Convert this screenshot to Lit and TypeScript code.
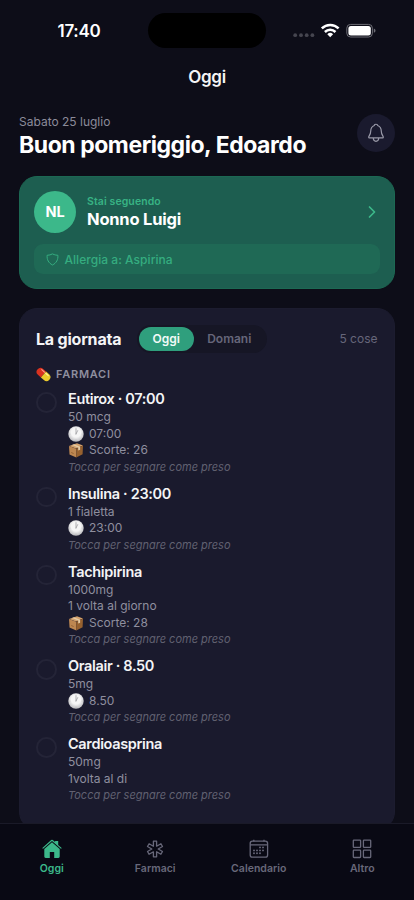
import { LitElement, html, css, svg, nothing } from "lit";
import { customElement, property } from "lit/decorators.js";

type Detail = { icon?: "clock" | "box"; text: string };
type Medicine = { name: string; details: Detail[] };

const medicines: Medicine[] = [
  { name: "Eutirox · 07:00", details: [{ text: "50 mcg" }, { icon: "clock", text: "07:00" }, { icon: "box", text: "Scorte: 26" }] },
  { name: "Insulina · 23:00", details: [{ text: "1 fialetta" }, { icon: "clock", text: "23:00" }] },
  { name: "Tachipirina", details: [{ text: "1000mg" }, { text: "1 volta al giorno" }, { icon: "box", text: "Scorte: 28" }] },
  { name: "Oralair · 8.50", details: [{ text: "5mg" }, { icon: "clock", text: "8.50" }] },
  { name: "Cardioasprina", details: [{ text: "50mg" }, { text: "1volta al di" }] },
];

const clock = html`<svg width="16" height="16" viewBox="0 0 16 16">
  <defs><radialGradient id="face" cx=".5" cy=".4" r=".6"><stop offset=".5" stop-color="#f6f6f6" /><stop offset="1" stop-color="#b9b9bd" /></radialGradient></defs>
  <circle cx="8" cy="8" r="7.7" fill="url(#face)" />
  <g fill="#a5a5a9"><circle cx="8" cy="2" r=".4" /><circle cx="14" cy="8" r=".4" /><circle cx="8" cy="14" r=".4" /><circle cx="2" cy="8" r=".4" /></g>
  <path d="M8 8V2.8M8 8l1.7-3.4" stroke="#929297" stroke-width=".7" fill="none" stroke-linecap="round" />
</svg>`;

const box = html`<svg width="16" height="16" viewBox="0 0 16 16">
  <path d="M1 4.1 9 1.2 15 3.4 8 6.6Z" fill="#d3a16c" />
  <path d="M1 4.1 8.3 6.7V15.4L1.5 12.5Z" fill="#bd8751" />
  <path d="M8.3 6.7 15 3.4 14.6 12.2 8.3 15.4Z" fill="#96612f" />
  <path d="m4 3 2-.7 6.1 2.4v3l-1.9.9v-3Z" fill="#e4cba6" />
  <path d="m3.2 10.5 2.4 1" stroke="#8c5a2d" stroke-width=".8" />
</svg>`;

const pill = html`<svg width="15" height="15" viewBox="0 0 15 15">
  <g transform="rotate(42 7.5 7.5)">
    <path d="M7.5 3.6H3.5a3.9 3.9 0 0 0 0 7.8h4Z" fill="#d9321f" />
    <path d="M7.5 3.6h4a3.9 3.9 0 0 1 0 7.8h-4Z" fill="#eccb2c" />
    <path d="M3 5.1h3.8" stroke="#ff9a86" stroke-width="1.1" stroke-linecap="round" />
    <path d="M8.3 5.1h3.5" stroke="#fff3a0" stroke-width="1.1" stroke-linecap="round" />
  </g>
</svg>`;

@customElement("medicine-row")
export class MedicineRow extends LitElement {
  @property({ attribute: false }) item!: Medicine;

  static styles = css`
    :host { display: flex; gap: 11.5px; color: #8f8f9f; }
    .check { box-sizing: border-box; width: 20.5px; height: 20.5px; margin-top: 3px; border: 2px solid #242437; border-radius: 50%; flex: none; }
    .name { color: #f4f4f6; font-size: 14.5px; font-weight: 600; line-height: 20px; letter-spacing: -0.34px; white-space: nowrap; }
    .detail { display: flex; align-items: center; gap: 5px; height: 16.5px; line-height: 16.5px; font-size: 12px; }
    .note { font-style: italic; font-size: 11px; line-height: 17px; color: #616171; white-space: nowrap; }
    svg { display: block; flex: none; }
  `;

  render() {
    return html`
      <div class="check"></div>
      <div>
        <div class="name">${this.item.name}</div>
        ${this.item.details.map(
          (d) => html`<div class="detail">${d.icon === "clock" ? clock : d.icon === "box" ? box : nothing}<span>${d.text}</span></div>`
        )}
        <div class="note">Tocca per segnare come preso</div>
      </div>
    `;
  }
}

const dots = [[10, 8.4], [13, 8.4], [4, 11.4], [7, 11.4], [10, 11.4], [13, 11.4], [4, 14.2], [7, 14.2], [10, 14.2]];

const homeIcon = html`<svg width="20" height="20" viewBox="0 0 20 20" fill="currentColor">
  <path d="M9.2 1.1a1.2 1.2 0 0 1 1.6 0l2.3 2V1.9h3.1v4l3.2 2.9a.55.55 0 0 1-.75.8L10 1.9 1.35 9.6a.55.55 0 0 1-.75-.8Z" />
  <path d="m10 3.2 7.7 6.9v7.5a1.3 1.3 0 0 1-1.3 1.3h-4.2v-6H7.8v6H3.6a1.3 1.3 0 0 1-1.3-1.3v-7.5Z" />
</svg>`;

const medicalIcon = html`<svg width="20" height="20" viewBox="0 0 20 20" fill="none" stroke="currentColor" stroke-width="1.3" stroke-linejoin="round">
  <path d="M8.4 2.2h3.2v5l4.3-2.5 1.6 2.8-4.3 2.5 4.3 2.5-1.6 2.8-4.3-2.5v5H8.4v-5l-4.3 2.5-1.6-2.8L6.8 10 2.5 7.5l1.6-2.8 4.3 2.5Z" />
</svg>`;

const calendarIcon = html`<svg width="20" height="20" viewBox="0 0 20 20" fill="none" stroke="currentColor" stroke-width="1.3">
  <rect x="1.2" y="2.2" width="17.4" height="16" rx="2.2" />
  <path d="M1.2 5.9h17.4M4.8 .8v1.6M15 .8v1.6" />
  <g fill="currentColor" stroke="none">${dots.map(([x, y]) => svg`<circle cx=${x + 1} cy=${y} r=".95" />`)}</g>
</svg>`;

const gridIcon = html`<svg width="20" height="20" viewBox="0 0 20 20" fill="none" stroke="currentColor" stroke-width="1.3">
  <rect x="1.3" y="1.1" width="7.3" height="7.3" rx=".7" /><rect x="11.4" y="1.1" width="7.3" height="7.3" rx=".7" />
  <rect x="1.3" y="11.2" width="7.3" height="7.3" rx=".7" /><rect x="11.4" y="11.2" width="7.3" height="7.3" rx=".7" />
</svg>`;

const tabs = [
  { label: "Oggi", icon: homeIcon, active: true },
  { label: "Farmaci", icon: medicalIcon, active: false },
  { label: "Calendario", icon: calendarIcon, active: false },
  { label: "Altro", icon: gridIcon, active: false },
];

@customElement("app-root")
export class AppRoot extends LitElement {
  static styles = css`
    :host { display: flex; flex-direction: column; width: 414px; height: 900px; overflow: hidden; background: #0d0d18; color: #fff; font-family: Inter, "Liberation Sans", sans-serif; white-space: nowrap; -webkit-font-smoothing: antialiased; }
    svg { display: block; flex: none; }
    .status { display: grid; grid-template-columns: 148px 118px 148px; height: 61px; flex: none; align-items: center; }
    .time { font-size: 17px; font-weight: 600; padding-left: 10px; text-align: center; letter-spacing: -0.3px; }
    .island { height: 34.5px; border-radius: 18px; background: #000; }
    .signals { display: flex; align-items: center; padding-left: 27px; }
    .nav { flex: none; height: 32px; line-height: 32px; text-align: center; font-size: 17px; font-weight: 600; letter-spacing: -0.3px; color: #f4f4f6; }
    .main { flex: 1; min-height: 0; overflow: hidden; padding: 20px 19px 0; }
    .hello { display: flex; justify-content: space-between; align-items: flex-start; height: 63px; }
    .date { font-size: 12px; line-height: 18px; color: #8b8b9a; }
    .greeting { font-size: 23px; line-height: 28px; font-weight: 700; letter-spacing: -0.45px; }
    .bell { display: flex; align-items: center; justify-content: center; width: 38px; height: 38px; margin-top: .5px; border-radius: 50%; background: #1a1a2e; color: #9999a8; }
    .patient { box-sizing: border-box; height: 113px; border: 1px solid #1c6853; border-radius: 18px; background: #1d5e50; padding: 14px; }
    .person { display: flex; align-items: center; height: 42px; gap: 11px; }
    .avatar { width: 42px; height: 42px; border-radius: 50%; background: #3cb88a; line-height: 42px; text-align: center; font-size: 14.5px; font-weight: 700; letter-spacing: -0.2px; }
    .who { flex: 1; }
    .following { font-size: 10.5px; line-height: 15px; font-weight: 600; letter-spacing: 0.1px; color: #38b384; }
    .patient-name { font-size: 16.5px; line-height: 21px; font-weight: 700; letter-spacing: -0.2px; }
    .chevron { margin-right: 3.5px; color: #3cb88a; }
    .allergy { display: flex; align-items: center; gap: 6px; height: 30px; margin-top: 11px; padding-left: 11.5px; border-radius: 9px; background: #1f6955; color: #35ad80; font-size: 12px; font-weight: 500; letter-spacing: 0.04px; }
    .day { box-sizing: border-box; height: 522px; margin-top: 18.5px; border: 1px solid #1c1c2f; border-radius: 18px; background: #1a1a2d; padding: 15.5px 16.5px 0 16px; }
    .day-head { display: flex; align-items: center; height: 29px; }
    .day-title { width: 101px; font-size: 16px; font-weight: 700; letter-spacing: -0.2px; color: #f4f4f6; }
    .segment { display: flex; box-sizing: border-box; width: 130px; height: 28px; padding: 2px; border-radius: 14px; background: #161625; font-size: 12px; font-weight: 600; line-height: 24px; text-align: center; color: #66667a; }
    .segment-on { width: 54.5px; border-radius: 12px; background: #2f9f7d; color: #f1faf7; }
    .segment-off { flex: 1; }
    .count { margin-left: auto; font-size: 12px; color: #66667a; }
    .category { display: flex; align-items: center; gap: 5px; height: 16px; margin-top: 13px; font-size: 11px; font-weight: 600; letter-spacing: 0.75px; color: #8f8f9f; }
    .list { display: flex; flex-direction: column; gap: 8px; margin-top: 7px; }
    .tabs { display: grid; grid-template-columns: repeat(4, 1fr); box-sizing: border-box; height: 77.5px; flex: none; border-top: 1.5px solid #1a1a28; background: #090914; padding-top: 15.5px; }
    .tab { display: flex; flex-direction: column; align-items: center; gap: 2px; color: #68687a; font-size: 10.5px; font-weight: 600; line-height: 16px; letter-spacing: 0.02px; }
    .tab-on { color: #3cb88a; }
  `;

  render() {
    return html`
      <div class="status">
        <div class="time">17:40</div>
        <div class="island"></div>
        <div class="signals">
          <svg width="84" height="18" viewBox="293 22 84 18">
            <g fill="#45454f"><circle cx="295.2" cy="35.2" r="1.9" /><circle cx="301" cy="35.2" r="1.9" /><circle cx="306.7" cy="35.2" r="1.9" /><circle cx="312.4" cy="35.2" r="1.9" /></g>
            <g fill="none" stroke="#fff" stroke-width="2.5">
              <path d="M321.8 28.4a12 12 0 0 1 16.8 0" />
              <path d="M324.9 32a7.6 7.6 0 0 1 10.6 0" />
            </g>
            <path d="M327.3 34.2a4.2 4.2 0 0 1 5.8 0L330.2 37.2Z" fill="#fff" />
            <rect x="346.8" y="24.4" width="25.6" height="12.6" rx="3.8" fill="none" stroke="#6d6d75" />
            <rect x="348.4" y="26" width="22.4" height="9.4" rx="2.5" fill="#fff" />
            <path d="M373.8 28.6q1.7.6 1.7 2.1t-1.7 2.1Z" fill="#6d6d75" />
          </svg>
        </div>
      </div>
      <div class="nav">Oggi</div>
      <div class="main">
        <div class="hello">
          <div>
            <div class="date">Sabato 25 luglio</div>
            <div class="greeting">Buon pomeriggio, Edoardo</div>
          </div>
          <div class="bell">
            <svg width="20" height="20" viewBox="0 0 20 20" fill="none" stroke="currentColor" stroke-width="1.2" stroke-linejoin="round">
              <path d="M8.3 2.5C8.3 .8 11.7 .8 11.7 2.5 14.2 3.4 15.2 5.6 15.3 8.2 15.4 12 17.3 12.8 17.3 14.3q0 .6-.7.6H3.4q-.7 0-.7-.6C2.7 12.8 4.6 12 4.7 8.2 4.8 5.6 5.8 3.4 8.3 2.5Z" />
              <path d="M7.3 15.1a2.7 3.2 0 0 0 5.4 0" />
            </svg>
          </div>
        </div>
        <div class="patient">
          <div class="person">
            <div class="avatar">NL</div>
            <div class="who">
              <div class="following">Stai seguendo</div>
              <div class="patient-name">Nonno Luigi</div>
            </div>
            <svg class="chevron" width="10" height="14" viewBox="0 0 10 14" fill="none" stroke="currentColor" stroke-width="1.7" stroke-linecap="round" stroke-linejoin="round"><path d="m2.5 2 5 5-5 5" /></svg>
          </div>
          <div class="allergy">
            <svg width="13" height="13" viewBox="0 0 13 13" fill="none" stroke="currentColor" stroke-width="1" stroke-linejoin="round"><path d="M6.5 .9Q4 2.2 1.1 2.3C.8 6.6 2.5 10 6.5 12 10.5 10 12.2 6.6 11.9 2.3 9 2.2 6.5 .9 6.5 .9Z" /></svg>
            <span>Allergia a: Aspirina</span>
          </div>
        </div>
        <div class="day">
          <div class="day-head">
            <div class="day-title">La giornata</div>
            <div class="segment"><div class="segment-on">Oggi</div><div class="segment-off">Domani</div></div>
            <div class="count">5 cose</div>
          </div>
          <div class="category">${pill}<span>FARMACI</span></div>
          <div class="list">${medicines.map((m) => html`<medicine-row .item=${m}></medicine-row>`)}</div>
        </div>
      </div>
      <div class="tabs">
        ${tabs.map((t) => html`<div class="tab ${t.active ? "tab-on" : ""}">${t.icon}<span>${t.label}</span></div>`)}
      </div>
    `;
  }
}
